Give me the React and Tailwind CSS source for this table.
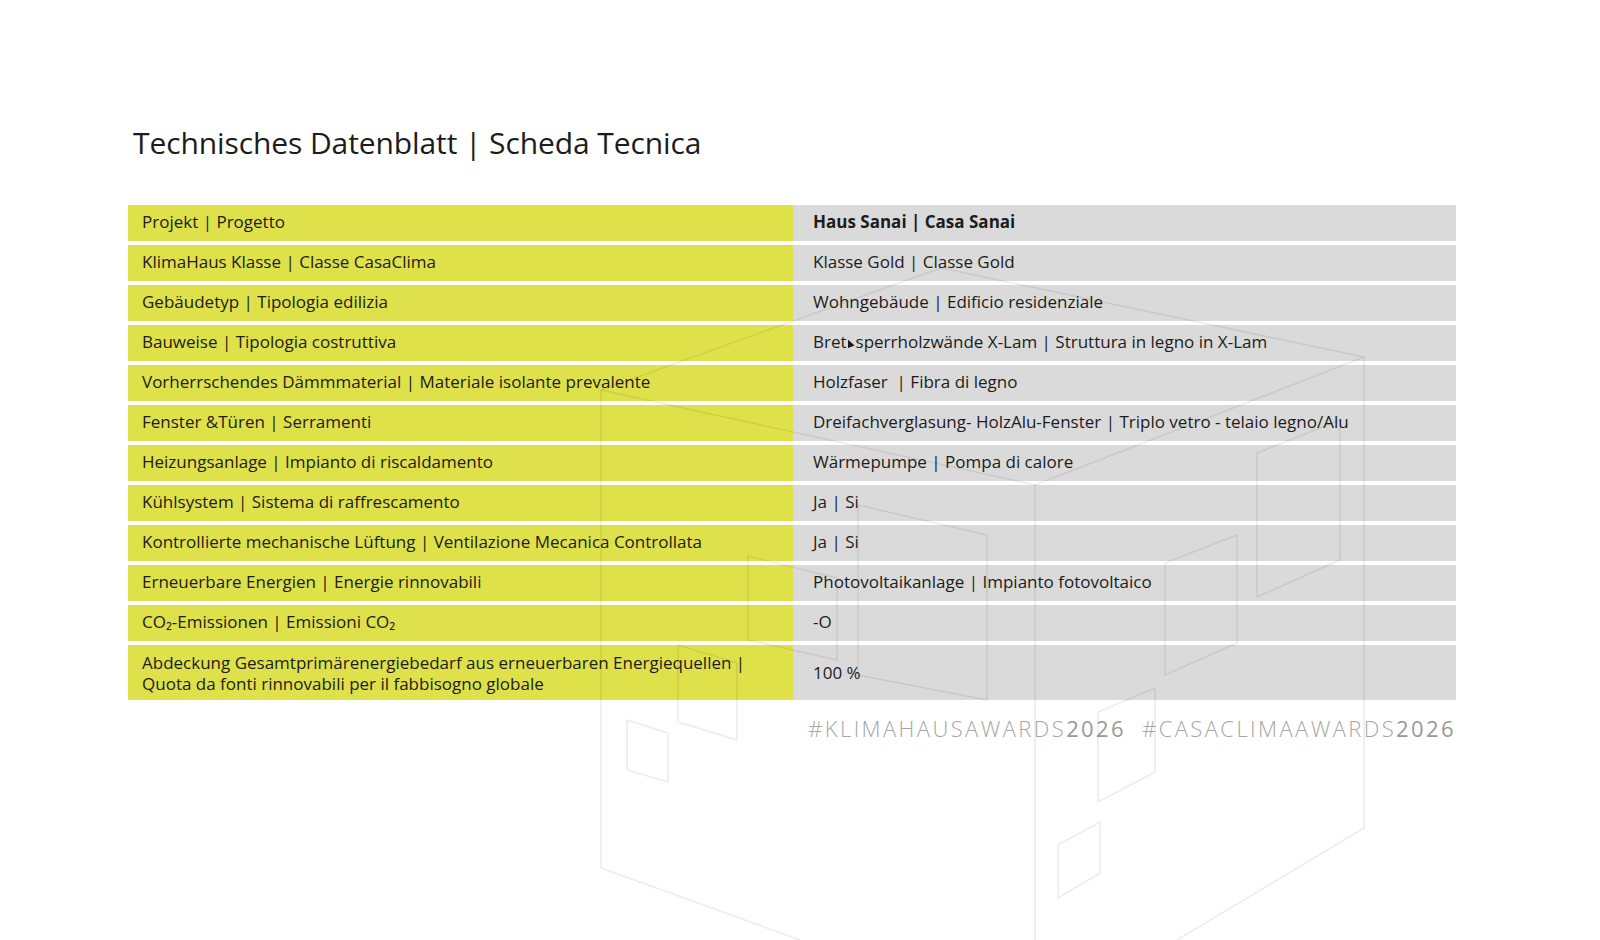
import React from 'react'

const rows = [
  { label: 'Projekt | Progetto', value: 'Haus Sanai | Casa Sanai', bold: true },
  { label: 'KlimaHaus Klasse | Classe CasaClima', value: 'Klasse Gold | Classe Gold' },
  { label: 'Gebäudetyp | Tipologia edilizia', value: 'Wohngebäude | Edificio residenziale' },
  { label: 'Bauweise | Tipologia costruttiva', value: 'cursor' },
  { label: 'Vorherrschendes Dämmmaterial | Materiale isolante prevalente', value: 'Holzfaser  | Fibra di legno' },
  { label: 'Fenster &Türen | Serramenti', value: 'Dreifachverglasung- HolzAlu-Fenster | Triplo vetro - telaio legno/Alu' },
  { label: 'Heizungsanlage | Impianto di riscaldamento', value: 'Wärmepumpe | Pompa di calore' },
  { label: 'Kühlsystem | Sistema di raffrescamento', value: 'Ja | Si' },
  { label: 'Kontrollierte mechanische Lüftung | Ventilazione Mecanica Controllata', value: 'Ja | Si' },
  { label: 'Erneuerbare Energien | Energie rinnovabili', value: 'Photovoltaikanlage | Impianto fotovoltaico' },
  { label: 'CO₂-Emissionen | Emissioni CO₂', value: '-O' },
]

// faint cube watermark drawn over the sheet
function Watermark() {
  return (
    <svg className="absolute inset-0 pointer-events-none" width="1600" height="940" viewBox="0 0 1600 940" fill="none">
      <g stroke="rgba(0,0,0,0.075)" strokeWidth="1.6" strokeLinejoin="round">
        <path d="M601 390 L941 268 L1364 357 L1364 828 L1177 940" />
        <path d="M601 390 L601 868 L800 940" />
        <path d="M601 390 L1035 485 L1364 357" />
        <path d="M1035 485 L1035 940" />
        <path d="M678 645 L737 663 L737 740 L678 722 Z" />
        <path d="M627 720 L668 733 L668 782 L627 770 Z" />
        <path d="M858 505 L987 535 L987 700 L858 675 Z" />
        <path d="M748 556 L837 578 L837 660 L748 640 Z" />
        <path d="M1098 712 L1155 688 L1155 772 L1098 802 Z" />
        <path d="M1165 563 L1237 535 L1237 643 L1165 675 Z" />
        <path d="M1257 453 L1340 420 L1340 560 L1257 597 Z" />
        <path d="M1058 845 L1100 822 L1100 873 L1058 898 Z" />
      </g>
    </svg>
  )
}

function Value({ v, bold }) {
  if (v === 'cursor') {
    return (
      <span>
        Bret<span className="inline-block w-[7px] h-[9px] bg-[#1a1a1a] [clip-path:polygon(0_0,100%_70%,0_100%)] mx-[1px]"></span>sperrholzwände X-Lam | Struttura in legno in X-Lam
      </span>
    )
  }
  return <span className={bold ? 'font-bold' : ''}>{v}</span>
}

export default function App() {
  return (
    <div className="relative w-[1600px] h-[940px] bg-white overflow-hidden font-['Open_Sans',sans-serif] text-[#1c1c1c]">
      <div className="pl-[128px] pt-[124px] w-[1456px]">
        <h1 className="pl-[5px] text-[30px] leading-[38px] tracking-[-0.1px]">Technisches Datenblatt | Scheda Tecnica</h1>
        <div className="mt-[43px] flex flex-col gap-[4px]">
          {rows.map((r, i) => (
            <div key={i} className="flex h-[36px] text-[17px]">
              <div className="w-[665px] bg-[#dfe14a] flex items-center pl-[14px] pb-[2px] whitespace-pre">{r.label}</div>
              <div className="flex-1 bg-[#dadada] flex items-center pl-[20px] pb-[2px] whitespace-pre">
                <Value v={r.value} bold={r.bold} />
              </div>
            </div>
          ))}
          <div className="flex h-[55px] text-[17px]">
            <div className="w-[665px] bg-[#dfe14a] flex items-center pl-[14px] leading-[21px]">
              <span>Abdeckung Gesamtprimärenergiebedarf aus erneuerbaren Energiequellen |<br />Quota da fonti rinnovabili per il fabbisogno globale</span>
            </div>
            <div className="flex-1 bg-[#dadada] flex items-center pl-[20px]">100 %</div>
          </div>
        </div>
        <div className="mt-[14px] flex justify-end gap-[16px] text-[22px] leading-[28px] tracking-[2.4px] text-[#a6a6a6]">
          <span><span className="font-light">#KLIMAHAUSAWARDS</span><span className="text-[#999999]">2026</span></span>
          <span><span className="font-light">#CASACLIMAAWARDS</span><span className="text-[#999999]">2026</span></span>
        </div>
      </div>
      <Watermark />
    </div>
  )
}
